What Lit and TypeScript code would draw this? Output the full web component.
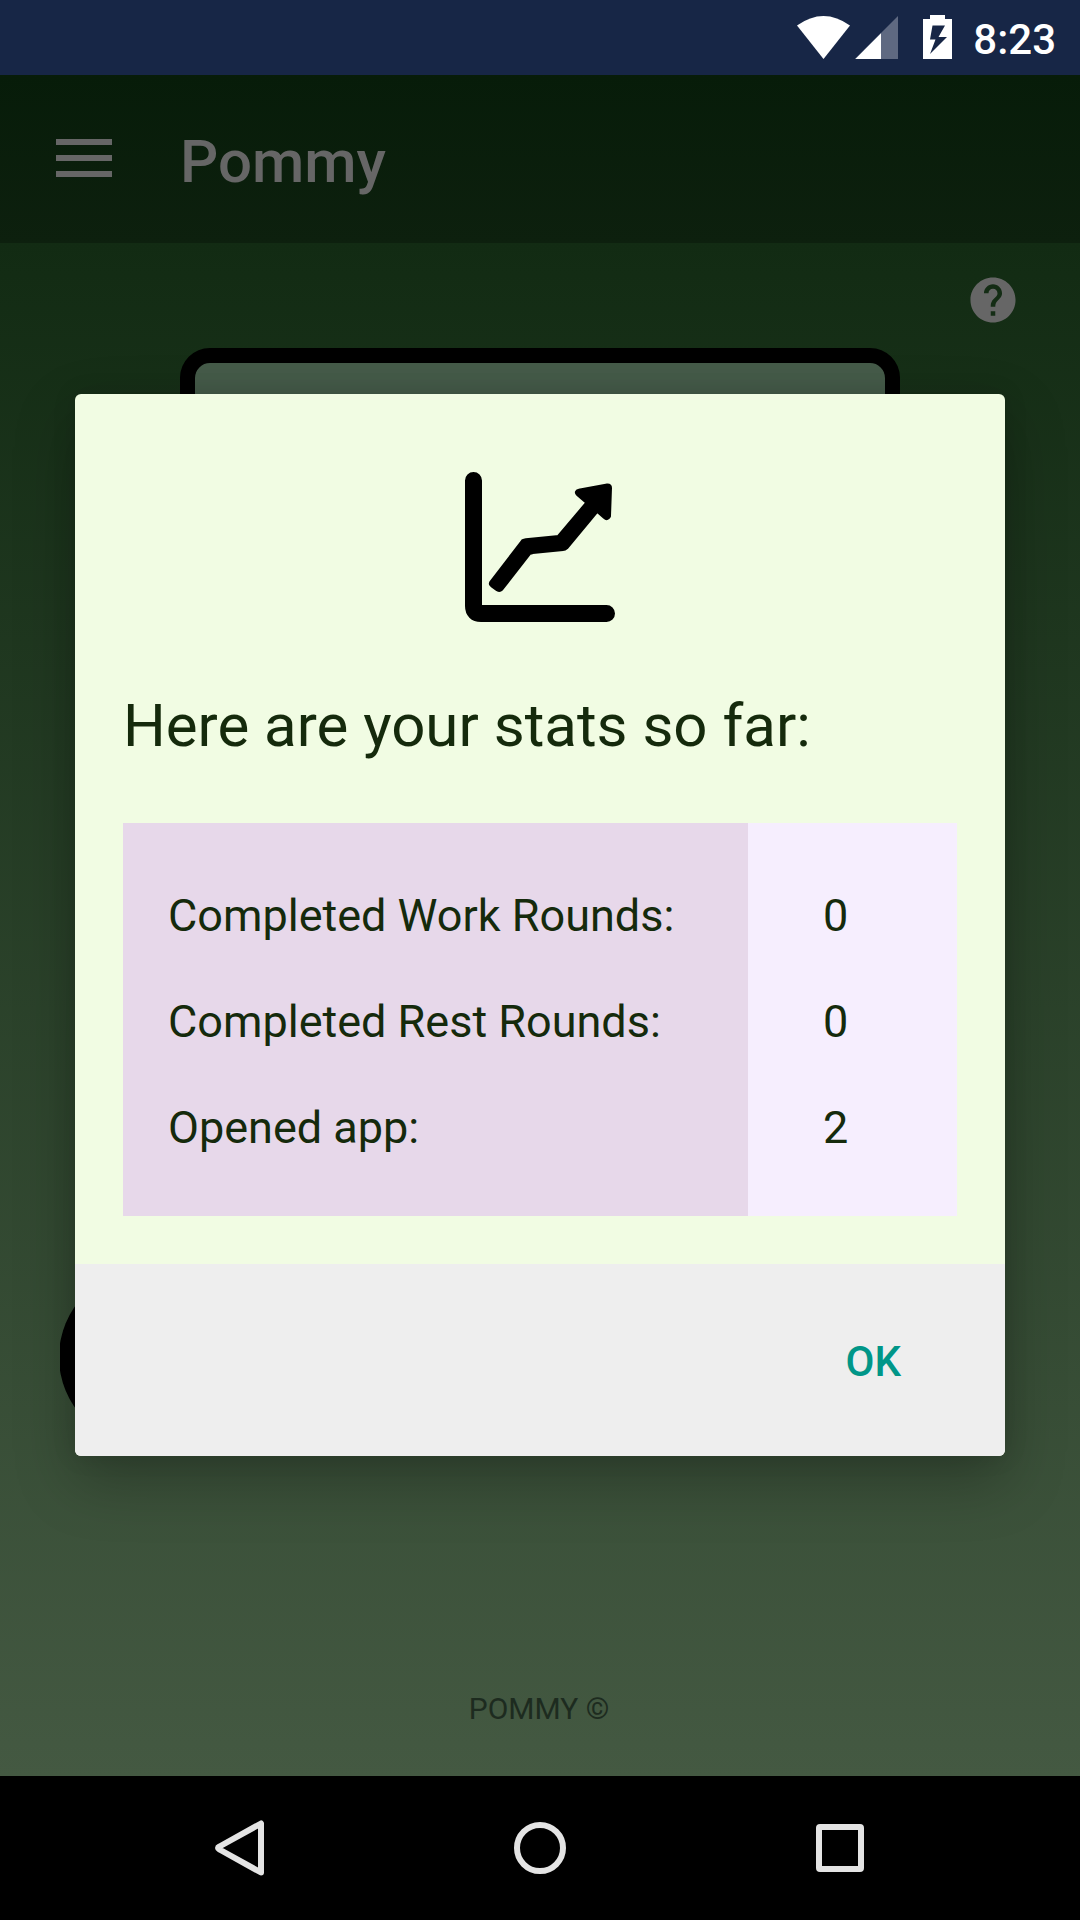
import { LitElement, html, css, svg } from "lit";
import { customElement, property } from "lit/decorators.js";

@customElement("status-bar")
class StatusBar extends LitElement {
  static styles = css`
    :host { display: block; height: 75px; background: #172646; }
    .row { display: flex; height: 75px; justify-content: flex-end; padding-right: 24px; }
    .icons { width: 176px; height: 75px; flex: none; }
    .time { font: 500 42px/49px Roboto, sans-serif; color: #fff; padding-top: 15px; margin-left: 7px; }
  `;
  render() {
    return html`<div class="row">
      <svg class="icons" viewBox="790 0 176 75">
        <path fill="#fff" d="M797 25.5Q823.500 6.500 850 25.500L823.500 59Z" />
        <path fill="#5f6981" d="M898 16V59H855Z" />
        <path fill="#fff" d="M881 33.300V59H855.300Z" />
        <path fill="#fff" fill-rule="evenodd" d="M923 19h7v-4h15v4h7v40h-29zM932.500 25.500L930 39.500H935.500L930 54L947 37H938.500L945 25.500Z" />
      </svg>
      <div class="time">8:23</div>
    </div>`;
  }
}

@customElement("app-toolbar")
class AppToolbar extends LitElement {
  static styles = css`
    :host { display: block; }
    .bar { display: flex; align-items: center; height: 168px; padding-left: 56px; box-sizing: border-box;
      background: linear-gradient(#071c09, #0d200e); }
    .menu { width: 56px; height: 38px; margin-bottom: 2px; }
    .title { font: 500 60px/70px Roboto, sans-serif; color: #666; margin-left: 68px; padding-top: 6px; }
  `;
  render() {
    return html`<div class="bar">
      <svg class="menu" viewBox="0 0 56 38"><path fill="#666" d="M0 0h56v6H0zM0 16h56v6H0zM0 32h56v6H0z" /></svg>
      <div class="title">Pommy</div>
    </div>`;
  }
}

@customElement("stats-dialog")
class StatsDialog extends LitElement {
  @property({ attribute: false }) stats: [string, number][] = [];
  static styles = css`
    .dialog { width: 930px; height: 1062px; border-radius: 6px; overflow: hidden; display: flex; flex-direction: column;
      background: #f1fce3; color: #152a0c; font-family: Roboto, sans-serif;
      box-shadow: 0 24px 60px rgba(0, 0, 0, .25), 0 0 24px rgba(0, 0, 0, .1); }
    .body { flex: 1; padding: 78px 48px 0; display: flex; flex-direction: column; }
    .chart { width: 150px; height: 150px; align-self: center; flex: none; }
    .heading { font-size: 60px; line-height: 70px; margin: 69px 0 0; font-weight: 400; white-space: nowrap; }
    .table { margin-top: 62px; width: 834px; height: 393px; display: grid; grid-template-columns: 625px 209px; }
    .names { background: #e7d8ea; padding: 40px 0 0 45px; }
    .values { background: #f6eefe; padding: 40px 0 0 75px; }
    .cell { font-size: 45px; line-height: 106px; white-space: nowrap; }
    .footer { height: 192px; background: #eee; display: flex; justify-content: flex-end; align-items: center; padding-right: 104px; box-sizing: border-box; }
    .ok { font: 500 42px/50px Roboto, sans-serif; color: #009688; background: none; border: 0; padding: 4px 0 0; }
  `;
  render() {
    return html`<section class="dialog">
      <div class="body">
        <svg class="chart" viewBox="465 472 150 150" fill="none" stroke="#000">
          <path stroke-width="17" stroke-linecap="round" d="M473.500 480.500V606Q473.500 613.500 481 613.500H606.500" />
          <path fill="#000" stroke="none" d="M478 600H482V605H488V610H478Z" />
          <path fill="#000" stroke-width="6" stroke-linejoin="round" d="M492 583L523.500 542Q524.500 541.500 526 541.300L559 538L589 502.500L578.500 493.500Q577 492 579 491.700L607.500 486.500Q609 486.500 609 488L608 516Q607 518 605.500 516.500L597 509L565.500 547Q564.500 548 563 548L532.500 551L529 552L500.500 588.500Q499.500 589.500 498 588.500L492.500 584.500Q491.500 584 492 583Z" />
        </svg>
        <h1 class="heading">Here are your stats so far:</h1>
        <div class="table">
          <div class="names">${this.stats.map(([name]) => html`<div class="cell">${name}</div>`)}</div>
          <div class="values">${this.stats.map(([, value]) => html`<div class="cell">${value}</div>`)}</div>
        </div>
      </div>
      <div class="footer"><button class="ok">OK</button></div>
    </section>`;
  }
}

const navIcons = [
  svg`<path d="M261 1823.500V1872.500L219.500 1849.500Q216.500 1848 219.500 1846.500Z" />`,
  svg`<circle cx="540" cy="1848" r="23" />`,
  svg`<rect x="819" y="1827" width="42" height="42" rx="1" />`,
];

@customElement("app-root")
class AppRoot extends LitElement {
  static styles = css`
    :host { display: block; }
    .screen { width: 1080px; height: 1920px; display: flex; flex-direction: column; position: relative; overflow: hidden; background: #000; }
    .content { flex: 1; display: flex; flex-direction: column; min-height: 0;
      background: linear-gradient(#122b13, #445942); }
    .help { align-self: flex-end; width: 46px; height: 46px; margin: 34px 64px 0 0; flex: none; }
    .panel { margin: 25px 180px 0; height: 500px; flex: none; box-sizing: border-box; border: 15px solid #000; border-radius: 30px;
      background: #455b49; }
    .round { width: 90px; height: 176px; margin: 421px 0 0 60px; flex: none; }
    .copyright { margin-top: auto; padding: 0 2px 48px 0; text-align: center; font: 400 30px/38px Roboto, sans-serif; color: #1d2b1f; }
    .overlay { position: absolute; left: 75px; top: 394px; }
    .nav { height: 144px; flex: none; }
    .navicons { display: block; width: 1080px; height: 144px; }
  `;
  render() {
    return html`<main class="screen">
      <status-bar></status-bar>
      <app-toolbar></app-toolbar>
      <div class="content">
        <svg class="help" viewBox="1.800 1.800 20.400 20.400"><path fill="#666" d="M12 2C6.480 2 2 6.480 2 12s4.480 10 10 10 10-4.480 10-10S17.520 2 12 2zm1 17h-2v-2h2v2zm2.070-7.750l-.9.920C13.450 12.900 13 13.500 13 15h-2v-.5c0-1.100.45-2.100 1.170-2.830l1.240-1.260c.37-.36.59-.86.59-1.410 0-1.100-.9-2-2-2s-2 .9-2 2H8c0-2.210 1.790-4 4-4s4 1.790 4 4c0 .88-.36 1.680-.93 2.250z" /></svg>
        <div class="panel"></div>
        <svg class="round" viewBox="60 1269 90 176"><circle cx="147" cy="1357" r="88" /></svg>
        <div class="copyright">POMMY ©</div>
      </div>
      <nav class="nav"><svg class="navicons" viewBox="0 1776 1080 144" fill="none" stroke="#e4e4e4" stroke-width="6" stroke-linejoin="round">${navIcons}</svg></nav>
      <stats-dialog class="overlay" .stats=${[["Completed Work Rounds:", 0], ["Completed Rest Rounds:", 0], ["Opened app:", 2]]}></stats-dialog>
    </main>`;
  }
}
